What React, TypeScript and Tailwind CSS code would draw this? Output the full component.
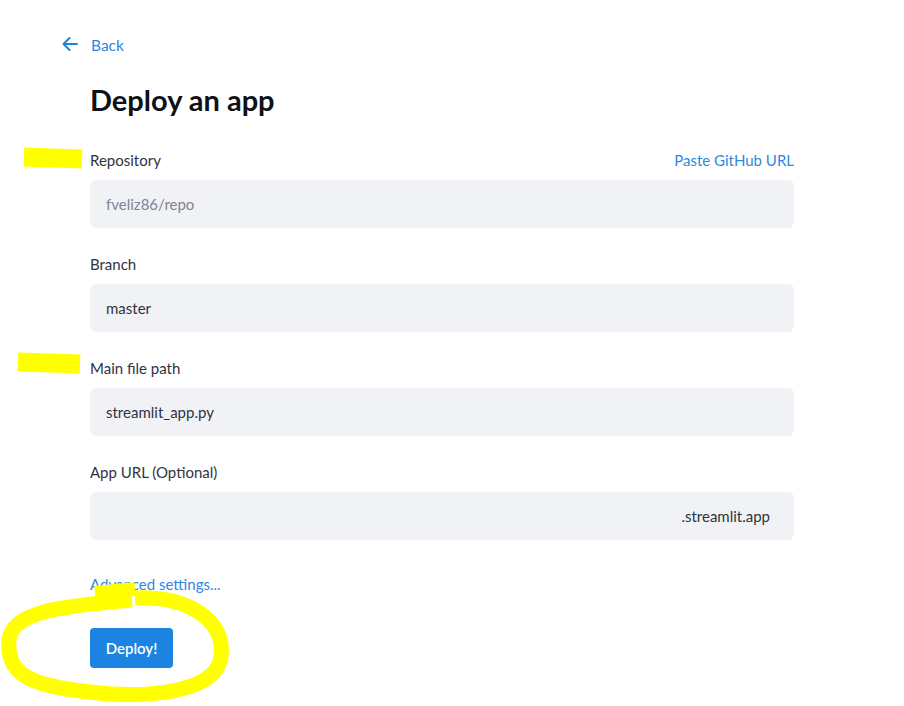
import React from "react";

const font = { fontFamily: "Lato, 'Noto Sans', sans-serif" };

function Field({ label, value, right, muted, alignRight }: { label: string; value: string; right?: string; muted?: boolean; alignRight?: boolean }) {
  return (
    <div className="flex flex-col">
      <div className="flex items-center justify-between h-[20px]">
        <span className="text-[15px] leading-[20px] text-[#31333f]">{label}</span>
        {right && <span className="text-[15px] leading-[20px] text-[#2f87e2]">{right}</span>}
      </div>
      <div
        className={
          "mt-[10px] h-[48px] rounded-[6px] bg-[#f0f2f6] flex items-center px-[16px] text-[15px] " +
          (muted ? "text-[#808495] " : "text-[#31333f] ") +
          (alignRight ? "justify-end pr-[24px]" : "")
        }
      >
        {value}
      </div>
    </div>
  );
}

export default function App() {
  return (
    <div className="relative w-[904px] h-[706px] bg-white overflow-hidden" style={font}>
      <div className="pt-[32px] pl-[62px]">
        <div className="flex items-center h-[24px]">
          <svg width="16" height="14" viewBox="0 0 16 14" fill="none" stroke="#1c83e1" strokeWidth="2" strokeLinecap="round" strokeLinejoin="round">
            <path d="M15 7H1.5M7.5 1L1.5 7l6 6" />
          </svg>
          <span className="ml-[13px] mt-[2px] leading-[24px] text-[15.5px] text-[#2f87e2]">Back</span>
        </div>
      </div>
      <div className="pl-[90px] w-[794px]">
        <h1 className="mt-[24px] h-[40px] leading-[40px] text-[29px] font-bold text-[#0e1117]">Deploy an app</h1>
        <div className="mt-[30px] flex flex-col gap-[26px]">
          <Field label="Repository" value="fveliz86/repo" right="Paste GitHub URL" muted />
          <Field label="Branch" value="master" />
          <Field label="Main file path" value="streamlit_app.py" />
          <Field label="App URL (Optional)" value=".streamlit.app" alignRight />
        </div>
        <div className="mt-[34px] h-[20px] leading-[20px] text-[15px] text-[#2f87e2]">Advanced settings...</div>
        <button className="mt-[34px] h-[40px] w-[83px] rounded-[4px] bg-[#1c83e1] text-white text-[15px] font-semibold">Deploy!</button>
      </div>
      <svg className="absolute inset-0 pointer-events-none" width="904" height="706" viewBox="0 0 904 706" fill="none" stroke="#ffff00" strokeLinecap="butt" strokeLinejoin="round">
        <path d="M24 157 L82 159" strokeWidth="19" />
        <path d="M18 362 L80 364" strokeWidth="19" />
        <path d="M95 593 L135 589" strokeWidth="14" />
        <path d="M135 598 C185 596 226 618 221 657 C216 692 150 699 90 692 C30 686 6 674 9 640 C12 612 60 606 132 600" strokeWidth="15" />
      </svg>
    </div>
  );
}
